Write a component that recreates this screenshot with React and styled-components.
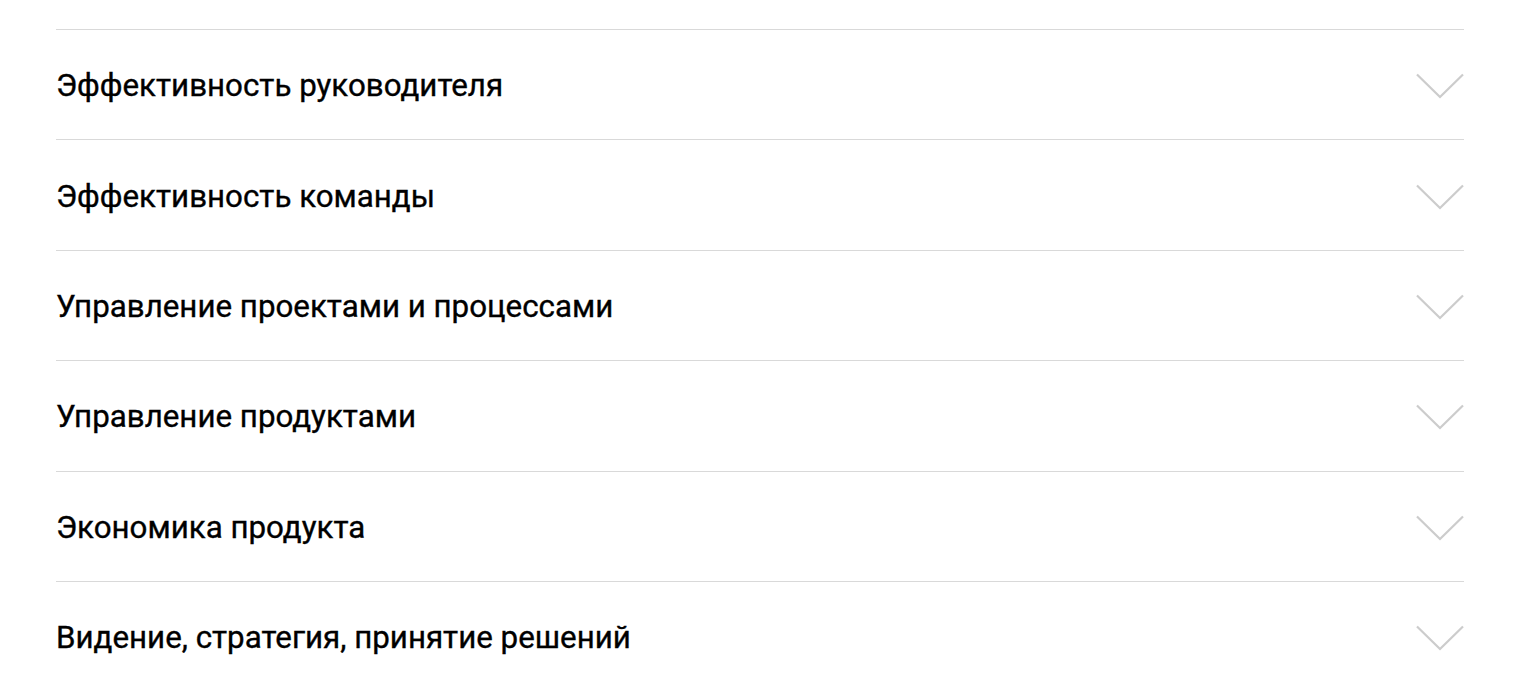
import React from "react";
import styled, { createGlobalStyle } from "styled-components";

const GlobalStyle = createGlobalStyle`
  body {
    margin: 0;
    background: #ffffff;
    font-family: Roboto, "Liberation Sans", sans-serif;
  }
`;

const Section = styled.section`
  width: 1408px;
  margin: 0 0 0 56px;
  padding-top: 29px;
`;

const Item = styled.div`
  box-sizing: border-box;
  height: 110.4px;
  border-top: 1px solid #d9d9d9;
  display: flex;
  align-items: center;
  justify-content: space-between;
  padding-top: 2px;
  cursor: pointer;
`;

const Title = styled.h3`
  margin: 0;
  font-size: 31.3px;
  font-weight: 400;
  color: #000000;
  -webkit-text-stroke: 0.35px #000;
`;

const Arrow = styled.svg`
  flex-shrink: 0;
  margin-top: 1px;
`;

const Chevron = () => (
  <Arrow width="48" height="26" viewBox="0 0 48 26" fill="none">
    <path d="M1 1.5 L24 24 L47 1.5" stroke="#cccccc" strokeWidth="2.2" />
  </Arrow>
);

const items = [
  "Эффективность руководителя",
  "Эффективность команды",
  "Управление проектами и процессами",
  "Управление продуктами",
  "Экономика продукта",
  "Видение, стратегия, принятие решений",
];

export default function App() {
  return (
    <>
      <GlobalStyle />
      <Section>
        {items.map((t) => (
          <Item key={t}>
            <Title>{t}</Title>
            <Chevron />
          </Item>
        ))}
      </Section>
    </>
  );
}
